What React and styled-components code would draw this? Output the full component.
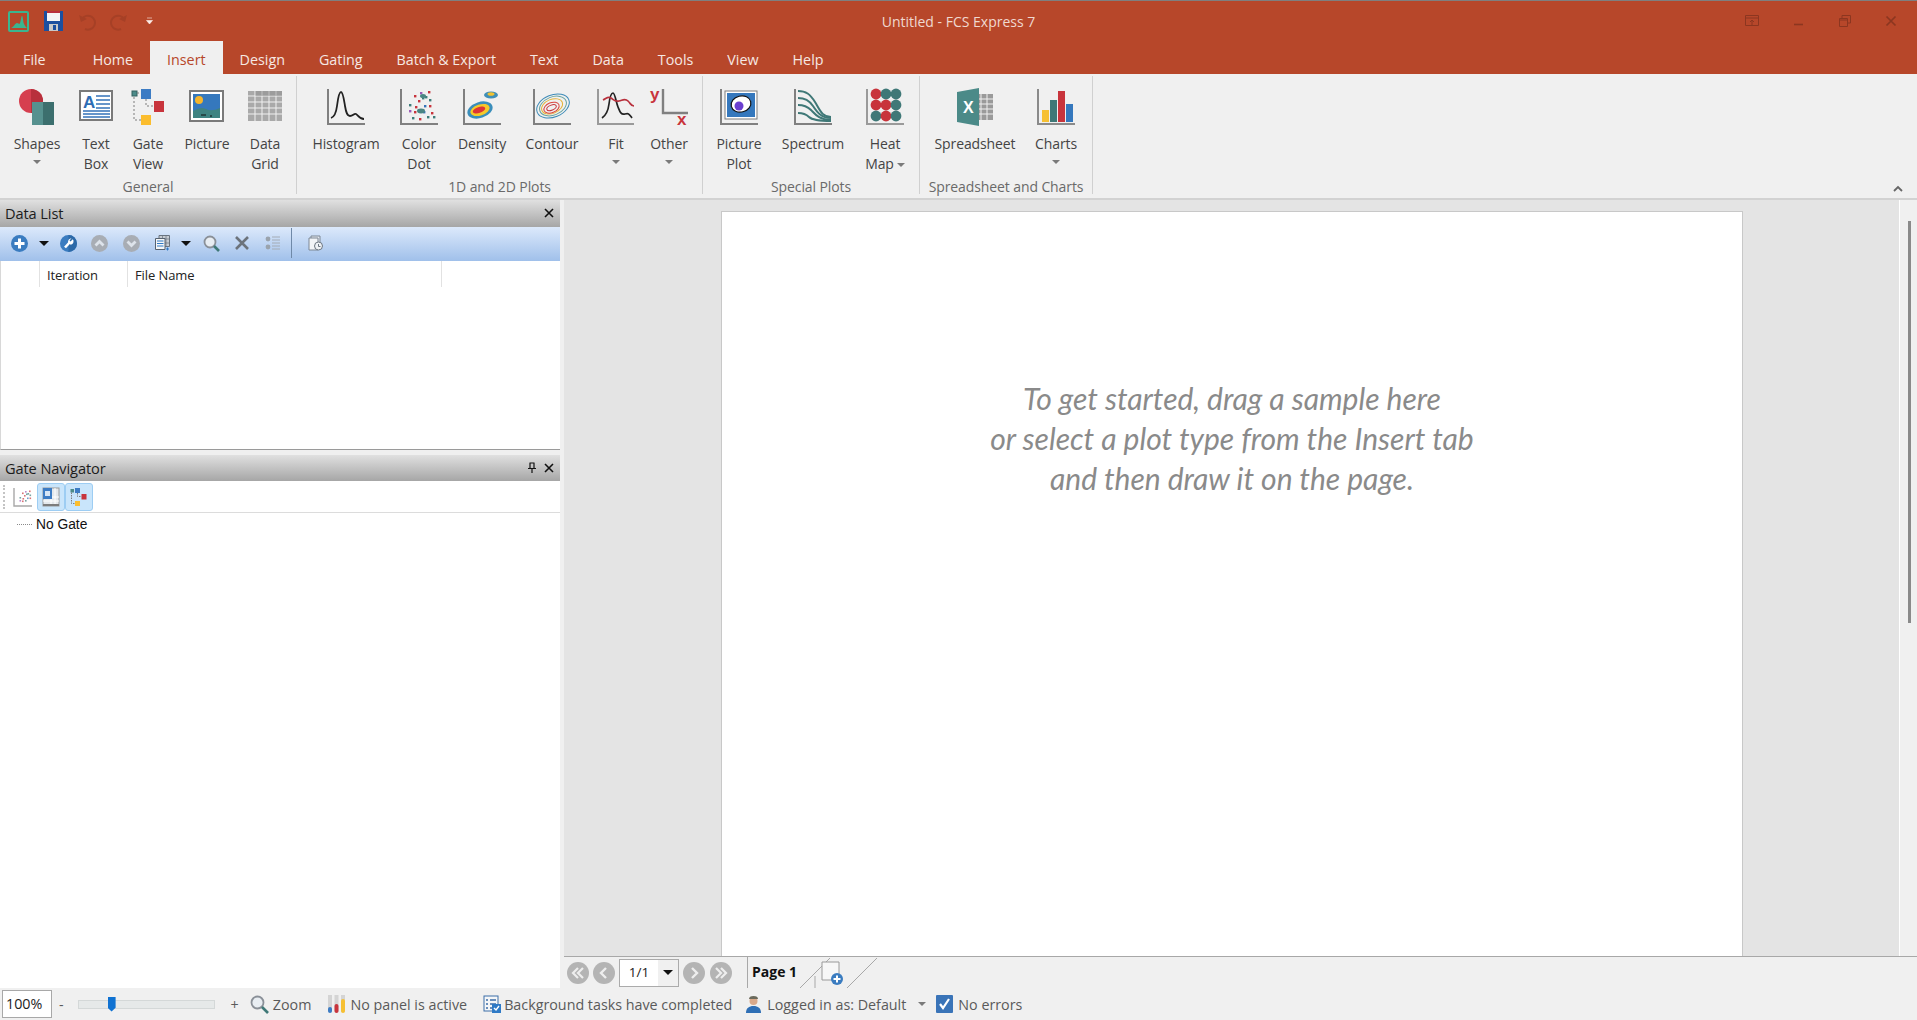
import React from "react"
import styled, { createGlobalStyle } from "styled-components"

const GlobalStyle = createGlobalStyle`
  html, body { margin: 0; padding: 0; background: #f0f0f0; overflow: hidden; }
  body { font-family: "Open Sans", "Noto Sans", sans-serif; }
`

const Shell = styled.div`
  width: 1917px;
  height: 1020px;
  display: flex;
  flex-direction: column;
  overflow: hidden;
`

const TitleBar = styled.header`
  height: 41px;
  box-sizing: border-box;
  border-top: 1px solid #7f7f7f;
  background: #b7472a;
  display: grid;
  grid-template-columns: 1fr auto 1fr;
  align-items: center;
`

const QuickAccess = styled.div`
  display: flex;
  align-items: center;
  padding-left: 8px;
  svg { display: block; flex: none; }
`

const QuickGap = styled.span`
  width: ${(p) => p.$w}px;
  flex: none;
`

const WindowTitle = styled.div`
  font-size: 14px;
  color: #f0d9d0;
`

const WindowControls = styled.div`
  display: flex;
  justify-content: flex-end;
  gap: 34px;
  padding-right: 20px;
  svg { display: block; }
`

const TabStrip = styled.nav`
  height: 33px;
  background: #b7472a;
  display: flex;
  align-items: stretch;
  padding-left: 6px;
`

const Tab = styled.div`
  font-size: 14.3px;
  padding: 9px ${(p) => p.$pr || 17}px 0 17px;
  box-sizing: border-box;
  color: ${(p) => (p.$active ? "#b7472a" : "#f6e8e3")};
  background: ${(p) => (p.$active ? "#f0f0f0" : "transparent")};
`

const Ribbon = styled.section`
  height: 126px;
  box-sizing: border-box;
  border-bottom: 2px solid #d2d2d2;
  background: #f0f0f0;
  display: flex;
  position: relative;
`

const RibbonGroup = styled.div`
  width: ${(p) => p.$w}px;
  box-sizing: border-box;
  margin-top: 2px;
  height: 118px;
  padding-left: ${(p) => p.$pad || 0}px;
  border-right: 1px solid #d0d0d0;
  display: flex;
  flex-direction: column;
`

const GroupButtons = styled.div`
  flex: none;
  height: 100px;
  display: flex;
`

const GroupLabel = styled.div`
  text-align: center;
  margin-left: ${(p) => -(p.$pad || 0)}px;
  font-size: 14px;
  letter-spacing: -0.1px;
  line-height: 18px;
  margin-top: 2px;
  color: #6a6a6a;
  white-space: nowrap;
`

const RibbonButton = styled.div`
  width: ${(p) => p.$w}px;
  flex: none;
  display: flex;
  flex-direction: column;
  align-items: center;
  padding-top: 12px;
  box-sizing: border-box;
`

const IconSlot = styled.div`
  height: 46px;
  svg { display: block; overflow: visible; }
`

const ButtonLabel = styled.div`
  font-size: 14px;
  letter-spacing: -0.1px;
  line-height: 20px;
  color: #444;
  text-align: center;
  white-space: nowrap;
`

const Caret = styled.span`
  display: inline-block;
  flex: none;
  width: 0;
  height: 0;
  border-left: ${(p) => p.$size || 4}px solid transparent;
  border-right: ${(p) => p.$size || 4}px solid transparent;
  border-top: ${(p) => p.$size || 4}px solid ${(p) => p.$color || "#7a7a7a"};
  margin-left: ${(p) => p.$ml || 0}px;
  margin-top: ${(p) => p.$mt || 0}px;
  vertical-align: middle;
`

const CollapseButton = styled.div`
  position: absolute;
  right: 14px;
  bottom: 6px;
  svg { display: block; }
`

const Main = styled.main`
  flex: 1;
  min-height: 0;
  display: flex;
`

const LeftPane = styled.aside`
  width: 564px;
  flex: none;
  box-sizing: border-box;
  border-right: 4px solid #f0f0f0;
  background: #fff;
  display: flex;
  flex-direction: column;
`

const DockTitle = styled.div`
  height: ${(p) => p.$h}px;
  flex: none;
  box-sizing: border-box;
  padding: 0 5px ${(p) => p.$pb || 0}px 5px;
  background: linear-gradient(#e0e0e0, #a6a6a6);
  display: flex;
  align-items: center;
  font-size: 14.6px;
  letter-spacing: -0.1px;
  color: #1c1c1c;
  gap: 6px;
`

const DockTitleText = styled.span`
  flex: 1;
`

const DataToolbar = styled.div`
  height: 34px;
  flex: none;
  box-sizing: border-box;
  background: linear-gradient(#dce9fb, #a0c0ea);
  display: flex;
  align-items: center;
  padding: 0 0 2px 6px;
  svg { display: block; flex: none; }
`

const ToolSlot = styled.div`
  width: ${(p) => p.$w}px;
  flex: none;
  display: flex;
  justify-content: center;
`

const ToolDivider = styled.div`
  width: 1px;
  height: 30px;
  flex: none;
  background: #6f89a8;
`

const DataList = styled.div`
  height: 189px;
  flex: none;
  box-sizing: border-box;
  border-bottom: 1px solid #9a9a9a;
  border-left: 1px solid #d8d8d8;
`

const ColumnRow = styled.div`
  height: 26px;
  display: flex;
  box-sizing: border-box;
`

const Column = styled.div`
  width: ${(p) => p.$w}px;
  flex: none;
  box-sizing: border-box;
  border-right: 1px solid #e2e2e2;
  padding-left: ${(p) => p.$pad || 0}px;
  font-size: 13px;
  letter-spacing: -0.1px;
  line-height: 29px;
  color: #222;
`

const PaneSpacer = styled.div`
  height: 5px;
  flex: none;
  background: #efefef;
`

const GateToolbar = styled.div`
  height: 32px;
  flex: none;
  box-sizing: border-box;
  border-bottom: 1px solid #dcdcdc;
  display: flex;
  align-items: center;
  padding-left: 3px;
  svg { display: block; }
`

const Grip = styled.div`
  width: 0;
  height: 24px;
  margin-right: 4px;
  border-left: 2px dotted #c4c4c4;
`

const GateButton = styled.div`
  width: 28px;
  height: 28px;
  box-sizing: border-box;
  display: flex;
  align-items: center;
  justify-content: center;
  border-radius: 3px;
  border: 1px solid ${(p) => (p.$on ? "#9dcdf3" : "transparent")};
  background: ${(p) => (p.$on ? "#c9e5fb" : "transparent")};
`

const TreeRow = styled.div`
  display: flex;
  align-items: center;
  padding: 0 0 0 17px;
  height: 22px;
  gap: 4px;
  font-family: "Liberation Sans", sans-serif;
  font-size: 13.8px;
  color: #111;
`

const TreeLine = styled.div`
  width: 15px;
  border-top: 1px dotted #8a8a8a;
`

const Workspace = styled.div`
  flex: 1;
  min-width: 0;
  display: flex;
  flex-direction: column;
`

const CanvasRow = styled.div`
  flex: 1;
  min-height: 0;
  background: #e4e4e4;
  display: flex;
`

const CanvasArea = styled.div`
  flex: 1;
  padding: 11px 156px 0 157px;
  min-width: 0;
`

const PageSheet = styled.div`
  height: 100%;
  box-sizing: border-box;
  background: #fff;
  border: 1px solid #c8c8c8;
  border-bottom: 0;
  padding-top: 166px;
  text-align: center;
  font-family: "Lato", sans-serif;
  font-style: italic;
  font-size: 30px;
  line-height: 40px;
  color: #8a8a8a;
`

const ScrollTrack = styled.div`
  width: 18px;
  flex: none;
  box-sizing: border-box;
  background: #f0f0f0;
  border-left: 1px solid #fff;
  padding: 21px 0 0 8px;
`

const ScrollThumb = styled.div`
  width: 3px;
  height: 402px;
  background: #8a8a8a;
`

const PageBar = styled.div`
  height: 32px;
  flex: none;
  box-sizing: border-box;
  border-top: 1px solid #a8a8a8;
  background: #f0f0f0;
  display: flex;
  align-items: center;
  padding-left: 3px;
  svg { display: block; flex: none; }
`

const NavButton = styled.div`
  width: 22px;
  height: 22px;
  flex: none;
  border-radius: 50%;
  background: #b4b4b4;
  margin-right: ${(p) => p.$gap}px;
  display: flex;
  align-items: center;
  justify-content: center;
`

const PageCombo = styled.div`
  width: 60px;
  height: 28px;
  flex: none;
  box-sizing: border-box;
  margin-right: 4px;
  border: 1px solid #ababab;
  background: #fff;
  display: flex;
  align-items: stretch;
  font-size: 13.5px;
  color: #222;
`

const PageComboValue = styled.div`
  flex: 1;
  text-align: center;
  line-height: 25px;
`

const PageComboArrow = styled.div`
  width: 20px;
  background: #f0f0f0;
  display: flex;
  align-items: center;
  justify-content: center;
`

const PageTab = styled.div`
  margin-left: 15px;
  height: 100%;
  width: 53px;
  flex: none;
  border-left: 1px solid #a8a8a8;
  padding: 2px 0 0 4px;
  box-sizing: border-box;
  line-height: 26px;
  font-size: 14px;
  font-weight: 700;
  color: #111;
  white-space: nowrap;
`

const StatusBar = styled.footer`
  height: 32px;
  flex: none;
  background: #f0f0f0;
  display: flex;
  align-items: center;
  font-size: 14.3px;
  color: #5a5a5a;
  svg { display: block; flex: none; }
`

const ZoomInput = styled.div`
  width: 50px;
  height: 28px;
  box-sizing: border-box;
  margin-left: 2px;
  border: 1px solid #a8a8a8;
  background: #fff;
  color: #222;
  padding-left: 3px;
  line-height: 26px;
  flex: none;
`

const SliderTrack = styled.div`
  width: 137px;
  height: 9px;
  box-sizing: border-box;
  border: 1px solid #d4d8d8;
  background: #e6e9e9;
  margin: 0 14px;
  position: relative;
  flex: none;
`

const SliderThumb = styled.div`
  position: absolute;
  left: 29px;
  top: -4px;
  width: 8px;
  height: 15px;
  background: #0f72d2;
  clip-path: polygon(0 0, 100% 0, 100% 75%, 50% 100%, 0 75%);
`

const StatusItem = styled.div`
  display: flex;
  align-items: center;
  gap: ${(p) => p.$gap || 4}px;
  margin-left: ${(p) => p.$left}px;
  white-space: nowrap;
  flex: none;
`

const Mini = ({ children, w = 20, h = 20, vb }) => (
  <svg width={w} height={h} viewBox={vb || `0 0 ${w} ${h}`}>
    {children}
  </svg>
)

const Axes = ({ x = 1, y = 1, r = 38, b = 36, c = "#808080" }) => (
  <path d={`M${x} ${y}V${b}H${r}`} fill="none" stroke={c} strokeWidth="2" />
)

const ShapesIcon = () => (
  <Mini w={38} h={38}>
    <circle cx="13" cy="13" r="12" fill="#d63f4f" />
    <path d="M13 1a12 12 0 0 1 0 24z" fill="#b8303c" />
    <rect x="14" y="14" width="11" height="23" fill="#56918f" />
    <rect x="25" y="14" width="11" height="23" fill="#3c6f6e" />
  </Mini>
)

const TextBoxIcon = () => (
  <Mini w={34} h={34}>
    <rect x="1" y="3" width="32" height="29" fill="#fff" stroke="#7a7a7a" strokeWidth="2" />
    <text x="4" y="20" fontFamily="Liberation Sans" fontWeight="700" fontSize="17" fill="#2e6db4">A</text>
    <path d="M17 8h14M17 12h14M17 16h14M17 20h14M4 23h27M4 26h27M4 29h27" stroke="#3573b9" strokeWidth="1.6" />
  </Mini>
)

const GateViewIcon = () => (
  <Mini w={34} h={38}>
    <rect x="1" y="3" width="5" height="5" fill="#4c8b89" stroke="#33605f" />
    <rect x="10" y="1" width="10" height="10" fill="#3d7cc4" />
    <rect x="23" y="13" width="10" height="11" fill="#c8343c" />
    <rect x="10" y="27" width="10" height="10" fill="#fbbd2e" />
    <path d="M6 5h4M3 9v23h7M15 11v7h8" stroke="#7d7d7d" strokeDasharray="2 2" fill="none" />
  </Mini>
)

const PictureIcon = () => (
  <Mini w={36} h={34}>
    <rect x="1" y="3" width="33" height="30" fill="#fff" stroke="#7a7a7a" strokeWidth="2" />
    <rect x="4" y="6" width="27" height="24" fill="#3578bd" />
    <circle cx="10" cy="12" r="4" fill="#f6b52c" />
    <path d="M4 23q8-5 13-2t14-1v10H4z" fill="#3f8381" />
    <path d="M12 27h5M21 28h2" stroke="#111" />
  </Mini>
)

const GridIcon = () => (
  <Mini w={34} h={34}>
    <rect x="0" y="3" width="34" height="30" fill="#a9a9a9" />
    <path d="M7 3v30M14 3v30M21 3v30M28 3v30M0 8h34M0 14h34M0 20h34M0 26h34" stroke="#f0f0f0" />
    <rect x="7.5" y="3" width="26.5" height="5" fill="#8f8f8f" opacity="0.5" />
  </Mini>
)

const HistogramIcon = () => (
  <Mini w={38} h={38}>
    <Axes />
    <path d="M4 30c3-1 5-4 6-12s2-14 4-14 3 8 4 14 2 10 5 10 4-3 6-2 3 5 8 5" fill="none" stroke="#222" strokeWidth="1.8" />
  </Mini>
)

const dots = [
  [14, 7, "#c8343c"], [20, 4, "#9b59b6"], [28, 3, "#c8343c"], [22, 9, "#3d7c7a"], [25, 8, "#3d7c7a"], [18, 12, "#c8343c"], [29, 11, "#3d7c7a"],
  [9, 16, "#3d7c7a"], [15, 18, "#c8343c"], [24, 17, "#3573b9"], [29, 17, "#c8343c"], [9, 22, "#9b59b6"], [14, 23, "#c8343c"],
  [20, 22, "#3d7c7a"], [23, 23, "#3573b9"], [31, 24, "#c8343c"], [12, 29, "#3d7c7a"], [19, 30, "#c8343c"], [27, 28, "#3d7c7a"], [33, 28, "#3d7c7a"],
]

const ColorDotIcon = () => (
  <Mini w={38} h={38}>
    <Axes />
    {dots.map(([x, y, c], i) => (
      <rect key={i} x={x} y={y} width="2.4" height="2.4" fill={c} />
    ))}
    <ellipse cx="23" cy="8" rx="3" ry="2" fill="#4a8583" />
    <ellipse cx="21" cy="23" rx="4" ry="2.4" fill="#4a8583" />
  </Mini>
)

const DensityIcon = () => (
  <Mini w={38} h={38}>
    <Axes />
    <ellipse cx="28" cy="7" rx="7" ry="3.5" fill="#3f8fb8" />
    <ellipse cx="28" cy="6" rx="3.5" ry="1.8" fill="#f1c232" />
    <ellipse cx="17" cy="22" rx="13" ry="8" transform="rotate(-18 17 22)" fill="#3a8ebb" />
    <ellipse cx="17" cy="22" rx="10" ry="5.5" transform="rotate(-18 17 22)" fill="#f6c929" />
    <ellipse cx="16" cy="22" rx="6.5" ry="3" transform="rotate(-18 16 22)" fill="#dd3535" />
  </Mini>
)

const ContourIcon = () => (
  <Mini w={38} h={38}>
    <Axes />
    <g fill="none" transform="rotate(-22 20 18)">
      <ellipse cx="20" cy="18" rx="17" ry="11" stroke="#3d8bb8" strokeWidth="1" />
      <ellipse cx="20" cy="18" rx="14" ry="9" stroke="#67a39f" strokeWidth="1" />
      <ellipse cx="19" cy="18" rx="11" ry="7" stroke="#e5b53c" strokeWidth="1" />
      <ellipse cx="18" cy="19" rx="8" ry="5" stroke="#d9443f" strokeWidth="1" />
      <ellipse cx="18" cy="19" rx="5" ry="2.5" stroke="#c8343c" strokeWidth="1" />
    </g>
  </Mini>
)

const FitIcon = () => (
  <Mini w={38} h={38}>
    <Axes c="#9a9a9a" r={37} />
    <path d="M5 30c3-2 6-6 7-14s2-11 4-11 3 9 5 14 3 8 7 7 4 0 7 4" fill="none" stroke="#222" strokeWidth="1.7" />
    <path d="M6 12c4-2 5-4 8-2s4 4 8 3 6-3 9 0 3 5 6 5" fill="none" stroke="#b8303c" strokeWidth="1.7" />
  </Mini>
)

const OtherIcon = () => (
  <Mini w={38} h={38}>
    <path d="M13 1V25H38" fill="none" stroke="#808080" strokeWidth="2.4" />
    <text x="0" y="12" fontFamily="Liberation Sans" fontWeight="700" fontSize="17" fill="#c8343c">y</text>
    <text x="27" y="37" fontFamily="Liberation Sans" fontWeight="700" fontSize="17" fill="#c8343c">x</text>
  </Mini>
)

const PicturePlotIcon = () => (
  <Mini w={38} h={38}>
    <Axes />
    <rect x="5" y="3" width="32" height="28" fill="#fff" stroke="#7d7d7d" />
    <rect x="7" y="5" width="28" height="24" fill="#3578bd" />
    <ellipse cx="21" cy="16" rx="10" ry="8" transform="rotate(-14 21 16)" fill="#fff" stroke="#111" strokeWidth="1.2" />
    <circle cx="19" cy="18" r="4.5" fill="#6a3fd0" />
  </Mini>
)

const SpectrumIcon = () => (
  <Mini w={38} h={38}>
    <Axes />
    <g fill="none" stroke="#3f7877" strokeWidth="2">
      <path d="M4 3c8 0 12 3 17 11s7 15 16 15" />
      <path d="M4 10c7 0 11 2 15 8s8 12 18 12" />
      <path d="M4 17c6 0 9 1 13 5s8 10 20 10" />
      <path d="M4 25c5 0 8 1 11 4s10 4 22 4" />
    </g>
  </Mini>
)

const HeatMapIcon = () => (
  <Mini w={38} h={38}>
    <Axes c="#9a9a9a" />
    {[
      ["#c8343c", "#3f7877", "#3f7877"],
      ["#c8343c", "#c8343c", "#3f7877"],
      ["#3f7877", "#c8343c", "#3f7877"],
    ].map((row, r) =>
      row.map((c, i) => <circle key={`${r}${i}`} cx={10 + i * 10} cy={6 + r * 11} r="5.4" fill={c} />)
    )}
  </Mini>
)

const ExcelIcon = () => (
  <Mini w={38} h={38}>
    <rect x="20" y="6" width="17" height="26" fill="#9a9a9a" />
    <path d="M25 6v26M31 6v26M20 11h17M20 16h17M20 21h17M20 26h17" stroke="#f0f0f0" />
    <path d="M1 4L23 0V38L1 34z" fill="#4b8a88" />
    <text x="7" y="25" fontFamily="Liberation Sans" fontWeight="700" fontSize="16" fill="#fff">X</text>
  </Mini>
)

const ChartsIcon = () => (
  <Mini w={38} h={38}>
    <Axes c="#8a8a8a" />
    <rect x="5" y="22" width="7" height="12" fill="#f6c033" />
    <rect x="13" y="12" width="7" height="22" fill="#3f7877" />
    <rect x="21" y="3" width="7" height="31" fill="#c8343c" />
    <rect x="29" y="16" width="7" height="18" fill="#3578bd" />
  </Mini>
)

const groups = [
  {
    label: "General", w: 297, pad: 6,
    items: [
      { label: ["Shapes"], icon: <ShapesIcon />, w: 62, caret: true },
      { label: ["Text", "Box"], icon: <TextBoxIcon />, w: 56 },
      { label: ["Gate", "View"], icon: <GateViewIcon />, w: 48 },
      { label: ["Picture"], icon: <PictureIcon />, w: 70 },
      { label: ["Data", "Grid"], icon: <GridIcon />, w: 46 },
    ],
  },
  {
    label: "1D and 2D Plots", w: 406, pad: 13,
    items: [
      { label: ["Histogram"], icon: <HistogramIcon />, w: 72 },
      { label: ["Color", "Dot"], icon: <ColorDotIcon />, w: 74 },
      { label: ["Density"], icon: <DensityIcon />, w: 52 },
      { label: ["Contour"], icon: <ContourIcon />, w: 88 },
      { label: ["Fit"], icon: <FitIcon />, w: 40, caret: true },
      { label: ["Other"], icon: <OtherIcon />, w: 66, caret: true },
    ],
  },
  {
    label: "Special Plots", w: 217, pad: 8,
    items: [
      { label: ["Picture", "Plot"], icon: <PicturePlotIcon />, w: 56 },
      { label: ["Spectrum"], icon: <SpectrumIcon />, w: 92 },
      { label: ["Heat", "Map"], icon: <HeatMapIcon />, w: 52, inlineCaret: true },
    ],
  },
  {
    label: "Spreadsheet and Charts", w: 173, pad: 5,
    items: [
      { label: ["Spreadsheet"], icon: <ExcelIcon />, w: 100 },
      { label: ["Charts"], icon: <ChartsIcon />, w: 62, caret: true },
    ],
  },
]

const tabs = ["Home", "Insert", "Design", "Gating", "Batch & Export", "Text", "Data", "Tools", "View", "Help"]

const RoundIcon = ({ fill = "#3a7cc0", children }) => (
  <Mini w={17} h={17}>
    <circle cx="8.5" cy="8.5" r="8.5" fill={fill} />
    {children}
  </Mini>
)

const CloseGlyph = () => (
  <Mini w={12} h={12}>
    <path d="M2 2l8 8M10 2l-8 8" stroke="#111" strokeWidth="1.6" />
  </Mini>
)

const App = () => {
  return (
    <Shell>
      <GlobalStyle />
      <TitleBar>
        <QuickAccess>
          <Mini w={21} h={21}>
            <rect x="1" y="1" width="19" height="19" rx="1" fill="none" stroke="#3ab58f" strokeWidth="2" />
            <path d="M3 17c3-1 4-5 6-5s2 2 3 0 1-7 2-7 1 6 2 8 2 3 3 4z" fill="#3ab58f" />
          </Mini>
          <QuickGap $w={15} />
          <Mini w={19} h={20}>
            <rect x="0" y="0" width="19" height="20" fill="#1b4f9f" />
            <rect x="3" y="0" width="13" height="10" fill="#f4f4f4" />
            <rect x="3" y="0" width="13" height="2" fill="#b8303c" />
            <rect x="5" y="13" width="9" height="7" fill="#c8c8c8" />
            <rect x="9" y="14" width="3" height="5" fill="#1b4f9f" />
          </Mini>
          <QuickGap $w={15} />
          <Mini w={19} h={19}>
            <path d="M4 7a7 7 0 1 1 3 10" fill="none" stroke="#a64026" strokeWidth="2" />
            <path d="M1 3l2 7 6-3z" fill="#a64026" />
          </Mini>
          <QuickGap $w={12} />
          <Mini w={19} h={19}>
            <path d="M15 7a7 7 0 1 0-3 10" fill="none" stroke="#a64026" strokeWidth="2" />
            <path d="M18 3l-2 7-6-3z" fill="#a64026" />
          </Mini>
          <QuickGap $w={18} />
          <Mini w={7} h={8}>
            <path d="M1 1h5M0.5 3.5h6L3.5 7z" fill="#fbeee9" stroke="#fbeee9" strokeWidth="0.6" />
          </Mini>
        </QuickAccess>
        <WindowTitle>Untitled - FCS Express 7</WindowTitle>
        <WindowControls>
          <Mini w={14} h={12}>
            <path d="M.5.5h13v10H.5zM.5 3h13M7 10V5M5 7l2-2 2 2" fill="none" stroke="#8c3620" />
          </Mini>
          <Mini w={12} h={12}>
            <path d="M1 9.5h9" stroke="#8c3620" strokeWidth="1.6" />
          </Mini>
          <Mini w={12} h={12}>
            <path d="M3 3V.5h8.5V8H9M.5 3.5h8v8h-8zM.5 5h8" fill="none" stroke="#8c3620" />
          </Mini>
          <Mini w={12} h={12}>
            <path d="M1.5 1.5l9 9M10.5 1.5l-9 9" stroke="#8c3620" strokeWidth="1.7" />
          </Mini>
        </WindowControls>
      </TitleBar>
      <TabStrip>
        <Tab $pr={30}>File</Tab>
        {tabs.map((t) => (
          <Tab key={t} $active={t === "Insert"}>
            {t}
          </Tab>
        ))}
      </TabStrip>
      <Ribbon>
        {groups.map((g) => (
          <RibbonGroup key={g.label} $w={g.w} $pad={g.pad}>
            <GroupButtons>
              {g.items.map((item) => (
                <RibbonButton key={item.label.join(" ")} $w={item.w}>
                  <IconSlot>{item.icon}</IconSlot>
                  {item.label.map((line, i) => (
                    <ButtonLabel key={line}>
                      {line}
                      {item.inlineCaret && i === 1 ? <Caret $ml={3} /> : null}
                    </ButtonLabel>
                  ))}
                  {item.caret ? <Caret $mt={6} /> : null}
                </RibbonButton>
              ))}
            </GroupButtons>
            <GroupLabel $pad={g.pad}>{g.label}</GroupLabel>
          </RibbonGroup>
        ))}
        <CollapseButton>
          <Mini w={10} h={7}>
            <path d="M1 6l4-4 4 4" fill="none" stroke="#666" strokeWidth="1.8" />
          </Mini>
        </CollapseButton>
      </Ribbon>
      <Main>
        <LeftPane>
          <DockTitle $h={27} $pb={2}>
            <DockTitleText>Data List</DockTitleText>
            <CloseGlyph />
          </DockTitle>
          <DataToolbar>
            <ToolSlot $w={26}>
              <RoundIcon><path d="M8.5 3.5v10M3.5 8.5h10" stroke="#fff" strokeWidth="3" /></RoundIcon>
            </ToolSlot>
            <ToolSlot $w={24}><Caret $color="#111" $size={5} /></ToolSlot>
            <ToolSlot $w={24}>
              <RoundIcon>
                <path d="M8.5 0a8.5 8.5 0 0 1 0 17z" fill="#2d6aa8" />
                <path d="M5 12.5l5-5.5" stroke="#fff" strokeWidth="2.6" />
                <path d="M12.8 4.2l-2.3 2.3-1-1 2-2.3a3.5 3.5 0 0 0-3.2 4.8l2.5 1.8a3.5 3.5 0 0 0 2-5.6z" fill="#fff" />
              </RoundIcon>
            </ToolSlot>
            <ToolSlot $w={38}>
              <RoundIcon fill="#a8adb4"><path d="M4.5 10.5l4-4 4 4" stroke="#dde3ea" strokeWidth="2.8" fill="none" /></RoundIcon>
            </ToolSlot>
            <ToolSlot $w={26}>
              <RoundIcon fill="#a8adb4"><path d="M4.5 6.5l4 4 4-4" stroke="#dde3ea" strokeWidth="2.8" fill="none" /></RoundIcon>
            </ToolSlot>
            <ToolSlot $w={36}>
              <Mini w={15} h={16}>
                <path d="M4 .5h10.5v11H4z" fill="#c6ccd3" stroke="#6a7480" />
                <path d="M7.5 .5v11M11 .5v11M4 4h10.5M4 8h10.5" stroke="#6a7480" strokeWidth="0.7" />
                <path d="M.5 3.5h9.5v11H.5z" fill="#f4f6f8" stroke="#566270" />
                <path d="M2 6h6.5M2 8.5h6.5M2 11h6.5" stroke="#2f78c4" strokeWidth="1.2" />
                <path d="M12.5 12.5v3M11 14h3" stroke="#2f78c4" />
              </Mini>
            </ToolSlot>
            <ToolSlot $w={12}><Caret $color="#111" $size={5} /></ToolSlot>
            <ToolSlot $w={38}>
              <Mini w={17} h={17}>
                <circle cx="7" cy="7" r="5.5" fill="#e8edf2" stroke="#8a9098" strokeWidth="1.8" />
                <path d="M11 11l5 5" stroke="#3f7877" strokeWidth="2.6" />
              </Mini>
            </ToolSlot>
            <ToolSlot $w={24}>
              <Mini w={16} h={16}>
                <path d="M2 2l12 12M14 2L2 14" stroke="#6c737b" strokeWidth="2.6" />
              </Mini>
            </ToolSlot>
            <ToolSlot $w={37}>
              <Mini w={15} h={16}>
                <path d="M7 2h8M7 5h8M7 8h8M7 11h8M7 14h8" stroke="#a4acb6" />
                <circle cx="3" cy="4" r="2.4" fill="#9aa3ad" />
                <circle cx="3" cy="12" r="2.4" fill="#9aa3ad" />
              </Mini>
            </ToolSlot>
            <ToolDivider />
            <ToolSlot $w={46}>
              <Mini w={15} h={16}>
                <path d="M3 1h9v11H3z" fill="#e3e8ef" stroke="#7c8794" />
                <path d="M1 3h9v12H1z" fill="#f2f4f7" stroke="#7c8794" />
                <circle cx="10.5" cy="11" r="4" fill="#eef1f5" stroke="#6c7681" />
                <path d="M10.5 9v2.5h2" fill="none" stroke="#6c7681" />
              </Mini>
            </ToolSlot>
          </DataToolbar>
          <DataList>
            <ColumnRow>
              <Column $w={39} />
              <Column $w={88} $pad={7}>Iteration</Column>
              <Column $w={314} $pad={7}>File Name</Column>
            </ColumnRow>
          </DataList>
          <PaneSpacer />
          <DockTitle $h={26}>
            <DockTitleText>Gate Navigator</DockTitleText>
            <Mini w={10} h={12}>
              <path d="M2.5 1h5M3 1v5M7 1v5M1 6.5h8M5 7v4" stroke="#111" strokeWidth="1.2" fill="none" />
            </Mini>
            <CloseGlyph />
          </DockTitle>
          <GateToolbar>
            <Grip />
            <GateButton>
              <Mini w={20} h={20}>
                <path d="M1 1v18h18" fill="none" stroke="#a8a8a8" strokeWidth="1.4" />
                {dots.slice(0, 14).map(([x, y, c], i) => (
                  <rect key={i} x={x / 2 + 2} y={y / 2 + 2} width="1.6" height="1.6" fill={c} opacity="0.7" />
                ))}
              </Mini>
            </GateButton>
            <GateButton $on>
              <Mini w={18} h={20}>
                <rect x="1" y="1" width="16" height="18" fill="#e4e8ec" stroke="#9a9a9a" />
                <path d="M9 1v18M13 1v18M1 10h16M1 14h16" stroke="#fff" />
                <rect x="1" y="1" width="9" height="11" fill="#3d7cc4" />
                <rect x="3" y="4" width="5" height="5" fill="#d8e6f6" />
                <rect x="1" y="17" width="16" height="2" fill="#7d7d7d" />
              </Mini>
            </GateButton>
            <GateButton $on>
              <Mini w={18} h={20} vb="0 0 36 38">
                <rect x="1" y="3" width="7" height="7" fill="#4c8b89" />
                <rect x="10" y="1" width="10" height="10" fill="#3d7cc4" />
                <rect x="23" y="13" width="10" height="11" fill="#c8343c" />
                <rect x="10" y="27" width="10" height="10" fill="#fbbd2e" />
                <path d="M3 10v22h7M15 11v7h8" stroke="#7d7d7d" strokeWidth="2" strokeDasharray="3 2" fill="none" />
              </Mini>
            </GateButton>
          </GateToolbar>
          <TreeRow>
            <TreeLine />
            No Gate
          </TreeRow>
        </LeftPane>
        <Workspace>
          <CanvasRow>
            <CanvasArea>
              <PageSheet>
                To get started, drag a sample here
                <br />
                or select a plot type from the Insert tab
                <br />
                and then draw it on the page.
              </PageSheet>
            </CanvasArea>
            <ScrollTrack>
              <ScrollThumb />
            </ScrollTrack>
          </CanvasRow>
          <PageBar>
            <NavButton $gap={4}>
              <Mini w={14} h={14}><path d="M7 2L2 7l5 5M12 2L7 7l5 5" fill="none" stroke="#eee" strokeWidth="2.2" /></Mini>
            </NavButton>
            <NavButton $gap={4}>
              <Mini w={14} h={14}><path d="M9 2L4 7l5 5" fill="none" stroke="#eee" strokeWidth="2.4" /></Mini>
            </NavButton>
            <PageCombo>
              <PageComboValue>1/1</PageComboValue>
              <PageComboArrow>
                <Caret $color="#111" $size={5} />
              </PageComboArrow>
            </PageCombo>
            <NavButton $gap={5}>
              <Mini w={14} h={14}><path d="M5 2l5 5-5 5" fill="none" stroke="#eee" strokeWidth="2.4" /></Mini>
            </NavButton>
            <NavButton $gap={0}>
              <Mini w={14} h={14}><path d="M2 2l5 5-5 5M7 2l5 5-5 5" fill="none" stroke="#eee" strokeWidth="2.2" /></Mini>
            </NavButton>
            <PageTab>Page 1</PageTab>
            <Mini w={80} h={31}>
              <path d="M0 31L30 1M47 31L77 1M15 31V19" fill="none" stroke="#a8a8a8" />
              <path d="M22 5h17v18h-17z" fill="#f7f7f7" stroke="#9a9a9a" />
              <circle cx="37" cy="22" r="6" fill="#3a7cc0" />
              <path d="M37 18.5v7M33.5 22h7" stroke="#fff" strokeWidth="2" />
            </Mini>
          </PageBar>
        </Workspace>
      </Main>
      <StatusBar>
        <ZoomInput>100%</ZoomInput>
        <StatusItem $left={7}>-</StatusItem>
        <SliderTrack>
          <SliderThumb />
        </SliderTrack>
        <StatusItem $left={2}>+</StatusItem>
        <StatusItem $left={11}>
          <Mini w={19} h={19}>
            <circle cx="7.5" cy="7.5" r="6" fill="#e8edf2" stroke="#8a9098" strokeWidth="1.8" />
            <path d="M12 12l6 6" stroke="#3f7877" strokeWidth="2.6" />
          </Mini>
          Zoom
        </StatusItem>
        <StatusItem $left={16}>
          <Mini w={19} h={20}>
            <path d="M3 1v17M9.5 1v17M16 1v17" stroke="#d4d4d4" strokeWidth="4" />
            <rect x="1" y="13" width="4" height="6" rx="2" fill="#3d7cc4" />
            <rect x="7.5" y="10" width="4" height="9" rx="2" fill="#c8343c" />
            <rect x="14" y="5" width="4" height="14" rx="2" fill="#f6c033" />
          </Mini>
          No panel is active
        </StatusItem>
        <StatusItem $left={16} $gap={3}>
          <Mini w={18} h={18}>
            <rect x="1" y="1" width="14" height="15" fill="#f4f6f8" stroke="#3d6ea8" />
            <path d="M3 5h2M7 5h6M3 9h2M7 9h6M3 13h2M7 13h3" stroke="#3d6ea8" strokeWidth="1.5" />
            <rect x="9" y="9" width="9" height="9" fill="#2f7ac6" />
            <path d="M11 13l2 2 3-4" fill="none" stroke="#fff" strokeWidth="1.4" />
          </Mini>
          Background tasks have completed
        </StatusItem>
        <StatusItem $left={14} $gap={6}>
          <Mini w={15} h={17}>
            <circle cx="7.5" cy="5" r="4" fill="#d9a98a" />
            <path d="M3 3a4.5 3 0 0 1 9 0z" fill="#6a6a5c" />
            <path d="M0 17c0-5 3-7 7.5-7s7.5 2 7.5 7z" fill="#2f6fb5" />
          </Mini>
          Logged in as: Default
        </StatusItem>
        <StatusItem $left={12}><Caret /></StatusItem>
        <StatusItem $left={10} $gap={5}>
          <Mini w={17} h={18}>
            <rect width="17" height="18" rx="1" fill="#3a74b8" />
            <path d="M4 9l3 4 6-9" fill="none" stroke="#fff" strokeWidth="2.2" />
          </Mini>
          No errors
        </StatusItem>
      </StatusBar>
    </Shell>
  )
}

export default App
